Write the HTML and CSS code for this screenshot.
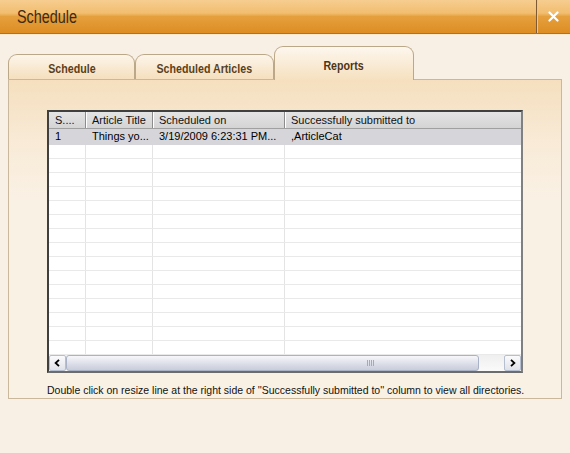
FILE: index.html
```
<!DOCTYPE html>
<html lang="en">
	<head>
		<meta charset="UTF-8" />
		<meta name="viewport" content="width=device-width, initial-scale=1.0" />
		<title>Schedule</title>
		<link rel="stylesheet" href="styles.css">
	</head>
	<body>
		<div class="titlebar">
			<div class="title"><span class="narrow">Schedule</span></div>
			<div class="close">
				<svg width="11" height="11" viewBox="0 0 11 11">
					<path d="M1.5 1.5 L9.5 9.5 M9.5 1.5 L1.5 9.5" stroke="#fff" stroke-width="2.2" stroke-linecap="round" />
				</svg>
			</div>
		</div>

		<div class="tabs">
			<div class="tab tab-schedule"><span class="narrow">Schedule</span></div>
			<div class="tab tab-articles"><span class="narrow">Scheduled Articles</span></div>
			<div class="tab tab-reports active"><span class="narrow">Reports</span></div>
		</div>

		<div class="panel">
			<div class="grid">
				<div class="grid-head">
					<div class="cell c1">S....</div>
					<div class="cell c2">Article Title</div>
					<div class="cell c3">Scheduled on</div>
					<div class="cell c4">Successfully submitted to</div>
				</div>
				<div class="grid-body">
					<div class="row first selected">
						<div class="cell c1">1</div>
						<div class="cell c2">Things yo...</div>
						<div class="cell c3">3/19/2009 6:23:31 PM...</div>
						<div class="cell c4">,ArticleCat</div>
					</div>
					<div class="row"><div class="cell c1"></div><div class="cell c2"></div><div class="cell c3"></div><div class="cell c4"></div></div>
					<div class="row"><div class="cell c1"></div><div class="cell c2"></div><div class="cell c3"></div><div class="cell c4"></div></div>
					<div class="row"><div class="cell c1"></div><div class="cell c2"></div><div class="cell c3"></div><div class="cell c4"></div></div>
					<div class="row"><div class="cell c1"></div><div class="cell c2"></div><div class="cell c3"></div><div class="cell c4"></div></div>
					<div class="row"><div class="cell c1"></div><div class="cell c2"></div><div class="cell c3"></div><div class="cell c4"></div></div>
					<div class="row"><div class="cell c1"></div><div class="cell c2"></div><div class="cell c3"></div><div class="cell c4"></div></div>
					<div class="row"><div class="cell c1"></div><div class="cell c2"></div><div class="cell c3"></div><div class="cell c4"></div></div>
					<div class="row"><div class="cell c1"></div><div class="cell c2"></div><div class="cell c3"></div><div class="cell c4"></div></div>
					<div class="row"><div class="cell c1"></div><div class="cell c2"></div><div class="cell c3"></div><div class="cell c4"></div></div>
					<div class="row"><div class="cell c1"></div><div class="cell c2"></div><div class="cell c3"></div><div class="cell c4"></div></div>
					<div class="row"><div class="cell c1"></div><div class="cell c2"></div><div class="cell c3"></div><div class="cell c4"></div></div>
					<div class="row"><div class="cell c1"></div><div class="cell c2"></div><div class="cell c3"></div><div class="cell c4"></div></div>
					<div class="row"><div class="cell c1"></div><div class="cell c2"></div><div class="cell c3"></div><div class="cell c4"></div></div>
					<div class="row"><div class="cell c1"></div><div class="cell c2"></div><div class="cell c3"></div><div class="cell c4"></div></div>
					<div class="row"><div class="cell c1"></div><div class="cell c2"></div><div class="cell c3"></div><div class="cell c4"></div></div>
				</div>
				<div class="hscroll">
					<div class="sb-btn">
						<svg width="7" height="8" viewBox="0 0 7 8"><path d="M5 0.8 L1.6 4 L5 7.2" fill="none" stroke="#000" stroke-width="1.8" /></svg>
					</div>
					<div class="sb-track">
						<div class="sb-thumb"><span class="grip"></span></div>
					</div>
					<div class="sb-btn">
						<svg width="7" height="8" viewBox="0 0 7 8"><path d="M2 0.8 L5.4 4 L2 7.2" fill="none" stroke="#000" stroke-width="1.8" /></svg>
					</div>
				</div>
			</div>
			<p class="hint">Double click on resize line at the right side of ''Successfully submitted to'' column to view all directories.</p>
		</div>
	</body>
</html>
```

FILE: styles.css
```
* {
	margin: 0;
	padding: 0;
	box-sizing: border-box;
}

body {
	background-color: #f9f0e5;
	font: 11px 'Liberation Sans', Arial, sans-serif;
	color: #000;
	width: 570px;
	height: 453px;
	overflow: hidden;
}

/* Arial Narrow look: squeeze Liberation Sans sideways */
.narrow {
	display: inline-block;
	transform: scaleX(0.82);
}

/* window title */
.titlebar {
	height: 34px;
	display: flex;
	background: linear-gradient(#f6cd90 0%, #f2bd6f 40%, #e5a03e 50%, #dd8d22 100%);
	border-bottom: 1px solid #a77236;
	box-shadow: 0 1px 0 #fbe9d0;
}
.title {
	flex: 1;
	padding-left: 17px;
	font: 18px 'Liberation Sans', Arial, sans-serif;
	line-height: 34px;
	color: #3e2a12;
}
.title .narrow {
	transform: scaleX(0.8);
	transform-origin: left center;
}
.close {
	width: 34px;
	display: flex;
	align-items: center;
	justify-content: center;
	border-left: 1px solid #7e5a34;
	box-shadow: inset 1px 0 0 #f3c484;
}

/* tabs */
.tabs {
	display: flex;
	align-items: flex-end;
	height: 45px;
	padding-left: 8px;
	position: relative;
	z-index: 1;
}
.tab {
	border: 1px solid #bba888;
	border-bottom: none;
	border-radius: 9px 9px 0 0;
	text-align: center;
	font: bold 13px 'Liberation Sans', Arial, sans-serif;
	line-height: 16px;
	color: #5a3f1c;
	height: 25px;
	padding-top: 6px;
	background: linear-gradient(#fdf5ea, #f5dfbd);
	white-space: nowrap;
}
.tab-schedule {
	width: 127px;
}
.tab-articles {
	width: 139px;
}
.tab-reports {
	width: 140px;
}
.tab.active {
	height: 34px;
	margin-bottom: -1px;
	padding-top: 11px;
	background: linear-gradient(#fdf7ee, #f6e0bf);
	color: #4e3516;
}

.panel {
	margin: 0 8px;
	height: 320px;
	border: 1px solid #c9b89c;
	background: linear-gradient(#f5dfbe 0px, #f8ead6 60px, #faf1e5 120px);
	padding: 30px 0 0 38px;
}

/* report grid */
.grid {
	width: 476px;
	height: 263px;
	border: 2px solid;
	border-color: #404040 #808080 #6c6c6c #404040;
	background-color: #fff;
}
.grid-head,
.row {
	display: flex;
}
.grid-head {
	height: 17px;
	background: linear-gradient(#e4e4e4, #d4d4d4);
	border-bottom: 1px solid #a0a0a0;
}
.cell {
	padding-left: 6px;
	white-space: nowrap;
	overflow: hidden;
}
.c1 {
	width: 37px;
}
.c2 {
	width: 67px;
}
.c3 {
	width: 132px;
}
.c4 {
	width: 236px;
}
.grid-head .cell {
	line-height: 16px;
	border-right: 1px solid #8c8c8c;
	box-shadow: inset 1px 0 0 #fff;
	color: #111;
}
.grid-head .c1 {
	box-shadow: none;
}
.grid-head .c4 {
	border-right: none;
}

.grid-body {
	height: 226px;
	overflow: hidden;
}
.row {
	height: 14px;
	border-bottom: 1px solid #e9e9e9;
}
.row .cell {
	border-right: 1px solid #e4e4e4;
}
.row .c4 {
	border-right: none;
}
.row.first {
	height: 16px;
	line-height: 15px;
}
.row.selected {
	background-color: #d6d6da;
	border-bottom-color: #d6d6da;
}
.row.selected .cell {
	border-right-color: #d6d6da;
}

.hscroll {
	height: 16px;
	display: flex;
	background-color: #f4f4f2;
}
.sb-btn {
	width: 17px;
	height: 16px;
	display: flex;
	align-items: center;
	justify-content: center;
	border: 1px solid #b6bfcf;
	border-radius: 2px;
	background: linear-gradient(#fbfbfd, #dfe2ea);
}
.sb-track {
	flex: 1;
	padding-right: 25px;
	background: linear-gradient(#efefef, #fafafa);
}
.sb-thumb {
	height: 16px;
	border: 1px solid #aab3c6;
	border-radius: 3px;
	background: linear-gradient(#f7f7fa, #dadce8 60%, #c9ccda);
	display: flex;
	align-items: center;
	justify-content: center;
}
.grip {
	width: 7px;
	height: 6px;
	margin-left: 195px;
	background: repeating-linear-gradient(90deg, #a5a9b8 0 1px, transparent 1px 2px);
}

.hint {
	margin-top: 11px;
	font-size: 10.5px;
	color: #111;
	white-space: nowrap;
}
```
